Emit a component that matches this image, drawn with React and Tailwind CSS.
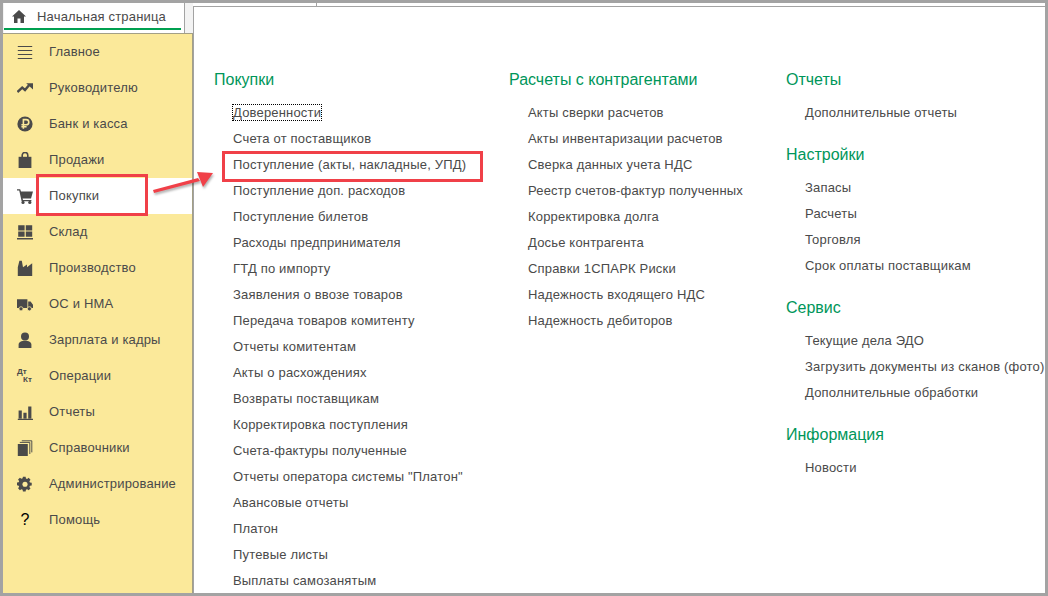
const C = "#4a4a4a";
const Ic = ({ children }) => (
  <svg width="16" height="16" viewBox="0 0 20 20" fill={C}>{children}</svg>
);
const icons = {
  menu: <Ic><path d="M1 2.500h18v1.200H1zM1 7.500h18v1.200H1zM1 12.500h18v1.200H1zM1 17.500h18v1.200H1z" /></Ic>,
  trend: <Ic><path d="M0.500 15l6-5.500 3.500 3 5-6" fill="none" stroke={C} strokeWidth="3" /><path d="M11.500 4H20v8z" /></Ic>,
  ruble: <Ic><circle cx="10" cy="10" r="9.500" /><path d="M8 16V4.500h3.500a3 3 0 0 1 0 6.500H5.500M5.500 13.500H12" fill="none" stroke="#fbe99a" strokeWidth="2" /></Ic>,
  bag: <Ic><path d="M2 6h16v14H2z" /><path d="M6.500 9V4a3.500 3.500 0 0 1 7 0v5" fill="none" stroke={C} strokeWidth="2" /></Ic>,
  cart: <Ic><path d="M0 1.500h4L5 4.500h15l-2.500 8.500H7l.5 2H18v1.500H5.800L2.800 3H0z" /><circle cx="7.500" cy="18" r="2" /><circle cx="16" cy="18" r="2" /></Ic>,
  grid: <Ic><path d="M1.500 1.500h8v6.500h-8zM11 1.500h8v6.500h-8zM1.500 9.500h8V16h-8zM11 9.500h8V16h-8zM0 17.500h20V19.500H0z" /></Ic>,
  factory: <Ic><path d="M1 20V9l2-8h3l1.500 8 5-3.500V9L19 4v16z" /></Ic>,
  truck: <Ic><path d="M0 4h13v11H0zM14 7h3l3 4v4h-6z" /><circle cx="5" cy="16" r="2.600" stroke="#fbe99a" strokeWidth="1" /><circle cx="15.500" cy="16" r="2.600" stroke="#fbe99a" strokeWidth="1" /></Ic>,
  person: <Ic><circle cx="10" cy="5.500" r="5" /><path d="M2 20v-4c0-3.500 3.500-5 8-5s8 1.500 8 5v4z" /></Ic>,
  reports: <Ic><path d="M2 8h4v10H2zM8 11h4v7H8zM14 3h4v15h-4zM1 18.500h19V20H1z" /></Ic>,
  books: <Ic><path d="M1 5h12.500v15H1z" /><path d="M3.500 3h12.500v14.500M6 1h12.500v14.500" fill="none" stroke={C} strokeWidth="1.200" /></Ic>,
  gear: <Ic><path fillRule="evenodd" d="M7.800 0h4.400l.5 3 1.900.8 2.500-1.800 3 3-1.800 2.500.8 1.900 3 .5v4.400l-3 .5-.8 1.900 1.800 2.500-3 3-2.500-1.800-1.900.8-.5 3H7.800l-.5-3-1.900-.8L2.900 22l-3-3 1.800-2.500-.8-1.900-3-.5V9.700l3-.5.8-1.900L-.1 4.800l3-3 2.500 1.800 1.900-.8z" transform="translate(1.400 .8) scale(.77)" /><circle cx="10" cy="10.300" r="3.200" fill="#fbe99a" /></Ic>,
};

const nav = [
  ["Главное", "menu"], ["Руководителю", "trend"], ["Банк и касса", "ruble"], ["Продажи", "bag"],
  ["Покупки", "cart"], ["Склад", "grid"], ["Производство", "factory"], ["ОС и НМА", "truck"],
  ["Зарплата и кадры", "person"], ["Операции", "dtkt"], ["Отчеты", "reports"], ["Справочники", "books"],
  ["Администрирование", "gear"], ["Помощь", "help"],
];

const col1 = ["Доверенности", "Счета от поставщиков", "Поступление (акты, накладные, УПД)", "Поступление доп. расходов", "Поступление билетов", "Расходы предпринимателя", "ГТД по импорту", "Заявления о ввозе товаров", "Передача товаров комитенту", "Отчеты комитентам", "Акты о расхождениях", "Возвраты поставщикам", "Корректировка поступления", "Счета-фактуры полученные", 'Отчеты оператора системы "Платон"', "Авансовые отчеты", "Платон", "Путевые листы", "Выплаты самозанятым"];
const col2 = ["Акты сверки расчетов", "Акты инвентаризации расчетов", "Сверка данных учета НДС", "Реестр счетов-фактур полученных", "Корректировка долга", "Досье контрагента", "Справки 1СПАРК Риски", "Надежность входящего НДС", "Надежность дебиторов"];
const col3 = [
  ["Отчеты", ["Дополнительные отчеты"]],
  ["Настройки", ["Запасы", "Расчеты", "Торговля", "Срок оплаты поставщикам"]],
  ["Сервис", ["Текущие дела ЭДО", "Загрузить документы из сканов (фото)", "Дополнительные обработки"]],
  ["Информация", ["Новости"]],
];

function NavIcon({ name }) {
  if (name === "dtkt")
    return (
      <div className="relative h-4 w-4 text-[8px] leading-[8px] font-bold text-[#4a4a4a]">
        <span className="absolute left-[0px] top-[0px]">Дт</span>
        <span className="absolute left-[6px] top-[8px]">Кт</span>
      </div>
    );
  if (name === "help")
    return <div className="flex h-4 w-4 items-center justify-center text-[16px] text-black">?</div>;
  return icons[name];
}

function Group({ title, items, className = "" }) {
  return (
    <div className={className}>
      <div className="h-[20px] text-[16px] leading-[20px] text-[#00965a]">{title}</div>
      <ul className="mt-[10px] flex flex-col pl-[19px]">
        {items.map((t) => (
          <li key={t} className="h-[26px] whitespace-nowrap text-[13px] leading-[26px] tracking-[0.18px] text-[#4a4a4a]">
            <span className={t === "Доверенности" ? "outline outline-1 outline-dotted outline-black" : ""}>{t}</span>
          </li>
        ))}
      </ul>
    </div>
  );
}

export default function App() {
  return (
    <div className="relative flex h-[596px] w-[1048px] flex-col overflow-hidden border-[3px] border-[#a3a3a3] bg-[#f3f3f3] font-['Liberation_Sans',Arial,sans-serif]">
      <div className="flex min-h-0 flex-1">
        <aside className="flex w-[190px] shrink-0 flex-col">
          <div className="ml-[1px] h-[30px] w-[181px] border-r border-[#a3a3a3] bg-white">
            <div className="flex h-[27px] w-[177px] items-center border-b-2 border-[#00a050] pl-[8px] pt-[2px]">
              <svg width="14" height="13" viewBox="0 0 14 13" fill={C}><path d="M7 0l7 6.500h-2V13H8.500V8.500h-3V13H2V6.500H0z" /></svg>
              <span className="ml-[11px] text-[13px] tracking-[0.18px] text-[#4a4a4a]">Начальная страница</span>
            </div>
          </div>
          <nav className="flex-1 border-t border-r border-[#a39f86] bg-[#fbe99a]">
            <ul>
              {nav.map(([t, ic]) => (
                <li key={t} className={`flex h-[36px] items-center pl-[14px] ${t === "Покупки" ? "bg-white" : ""}`}>
                  <NavIcon name={ic} />
                  <span className="ml-[16px] text-[13px] tracking-[0.18px] text-[#4a4a4a]">{t}</span>
                </li>
              ))}
            </ul>
          </nav>
        </aside>
        <div className="flex min-w-0 flex-1 flex-col bg-white pt-[3px]">
          <main className="flex min-h-0 flex-1 overflow-hidden border-l border-t border-[#a3a3a3] bg-white pl-[20px] pt-[63px]">
            <Group title="Покупки" items={col1} className="w-[295px] shrink-0" />
            <Group title="Расчеты с контрагентами" items={col2} className="w-[277px] shrink-0" />
            <div className="flex flex-col gap-[19px]">
              {col3.map(([h, it]) => <Group key={h} title={h} items={it} />)}
            </div>
          </main>
        </div>
      </div>

      <div className="absolute left-[313px] top-0 h-[3px] w-px bg-[#a3a3a3]" />
      <div className="absolute left-[33px] top-[171px] h-[42px] w-[112px] border-[3px] border-[#f04048]" />
      <div className="absolute left-[219px] top-[148px] h-[31px] w-[261px] border-[3px] border-[#f04048]" />
      <svg className="absolute left-[147px] top-[165px] drop-shadow-[1px_2px_1px_rgba(0,0,0,0.3)]" width="68" height="30" viewBox="0 0 68 30">
        <path d="M3 22L4 25 50 13 48 10z" fill="#f04048" />
        <path d="M47 4l16 1-10 14z" fill="#f04048" />
      </svg>
    </div>
  );
}
